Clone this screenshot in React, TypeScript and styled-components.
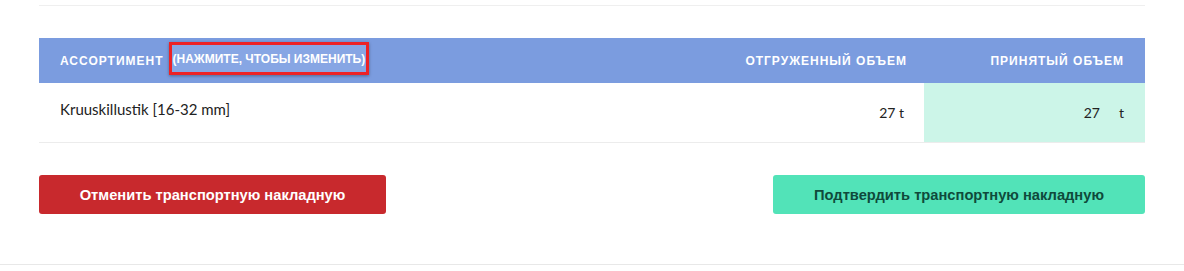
import * as React from 'react';
import styled, { createGlobalStyle } from 'styled-components';

const GlobalStyle = createGlobalStyle`
  body {
    margin: 0;
    background: #fff;
    font-family: Lato, "Noto Sans", sans-serif;
  }
`;

const Page = styled.div`
  border-bottom: 1px solid #e8e8e8;
  padding: 5px 0 50px;
`;

const Content = styled.div`
  width: 1106px;
  margin-left: 39px;
`;

const TopRule = styled.div`
  height: 1px;
  background: #efefef;
  margin-bottom: 32px;
`;

const Grid = styled.div`
  display: grid;
  grid-template-columns: 1fr 250px 221px;
`;

const HeadCell = styled.div<{ $right?: boolean; $pad?: number }>`
  height: 45px;
  background: #7b9cdf;
  display: flex;
  align-items: center;
  justify-content: ${(p) => (p.$right ? 'flex-end' : 'flex-start')};
  padding: 0 ${(p) => p.$pad ?? 21}px 0 21px;
  color: #fff;
  font-family: "Liberation Sans", Arial, sans-serif;
  font-weight: 700;
  font-size: 12px;
  letter-spacing: 1px;
  text-transform: uppercase;
  white-space: nowrap;
`;

const Hint = styled.span`
  display: inline-block;
  margin-left: 5px;
  margin-bottom: 5px;
  padding: 7px 1px 6px;
  letter-spacing: 0;
  background: #87a6e4;
  border: 3px solid #ec2226;
  box-shadow: 0 1px 3px rgba(0, 0, 0, 0.35);
`;

const Cell = styled.div<{ $green?: boolean; $right?: boolean; $pad?: number }>`
  height: 59px;
  border-bottom: 1px solid #ececec;
  display: flex;
  align-items: center;
  justify-content: ${(p) => (p.$right ? 'flex-end' : 'flex-start')};
  padding: 0 ${(p) => p.$pad ?? 21}px 0 21px;
  background: ${(p) => (p.$green ? '#ccf5e8' : '#fff')};
  color: #222;
  font-size: 14px;
`;

const NameText = styled.span`
  margin-bottom: 8px;
  font-size: 15px;
`;

const Unit = styled.span`
  margin-left: 19px;
`;

const Actions = styled.div`
  display: flex;
  justify-content: space-between;
  margin-top: 32px;
`;

const Button = styled.button<{ $variant: 'cancel' | 'confirm' }>`
  height: 39px;
  width: ${(p) => (p.$variant === 'cancel' ? '347px' : '372px')};
  border: 0;
  border-radius: 3px;
  background: ${(p) => (p.$variant === 'cancel' ? '#c8292d' : '#52e3b8')};
  color: ${(p) => (p.$variant === 'cancel' ? '#fff' : '#0f4a3b')};
  font-family: "Liberation Sans", Arial, sans-serif;
  font-weight: 700;
  font-size: 14.7px;
  cursor: pointer;
`;

export default function App() {
  return (
    <>
      <GlobalStyle />
      <Page>
        <Content>
          <TopRule />
          <Grid>
            <HeadCell>
              Ассортимент<Hint>(нажмите, чтобы изменить)</Hint>
            </HeadCell>
            <HeadCell $right $pad={17}>Отгруженный объем</HeadCell>
            <HeadCell $right>Принятый объем</HeadCell>
            <Cell>
              <NameText>Kruuskillustik [16-32 mm]</NameText>
            </Cell>
            <Cell $right $pad={20}>27 t</Cell>
            <Cell $right $green>
              27<Unit>t</Unit>
            </Cell>
          </Grid>
          <Actions>
            <Button $variant="cancel">Отменить транспортную накладную</Button>
            <Button $variant="confirm">Подтвердить транспортную накладную</Button>
          </Actions>
        </Content>
      </Page>
    </>
  );
}
